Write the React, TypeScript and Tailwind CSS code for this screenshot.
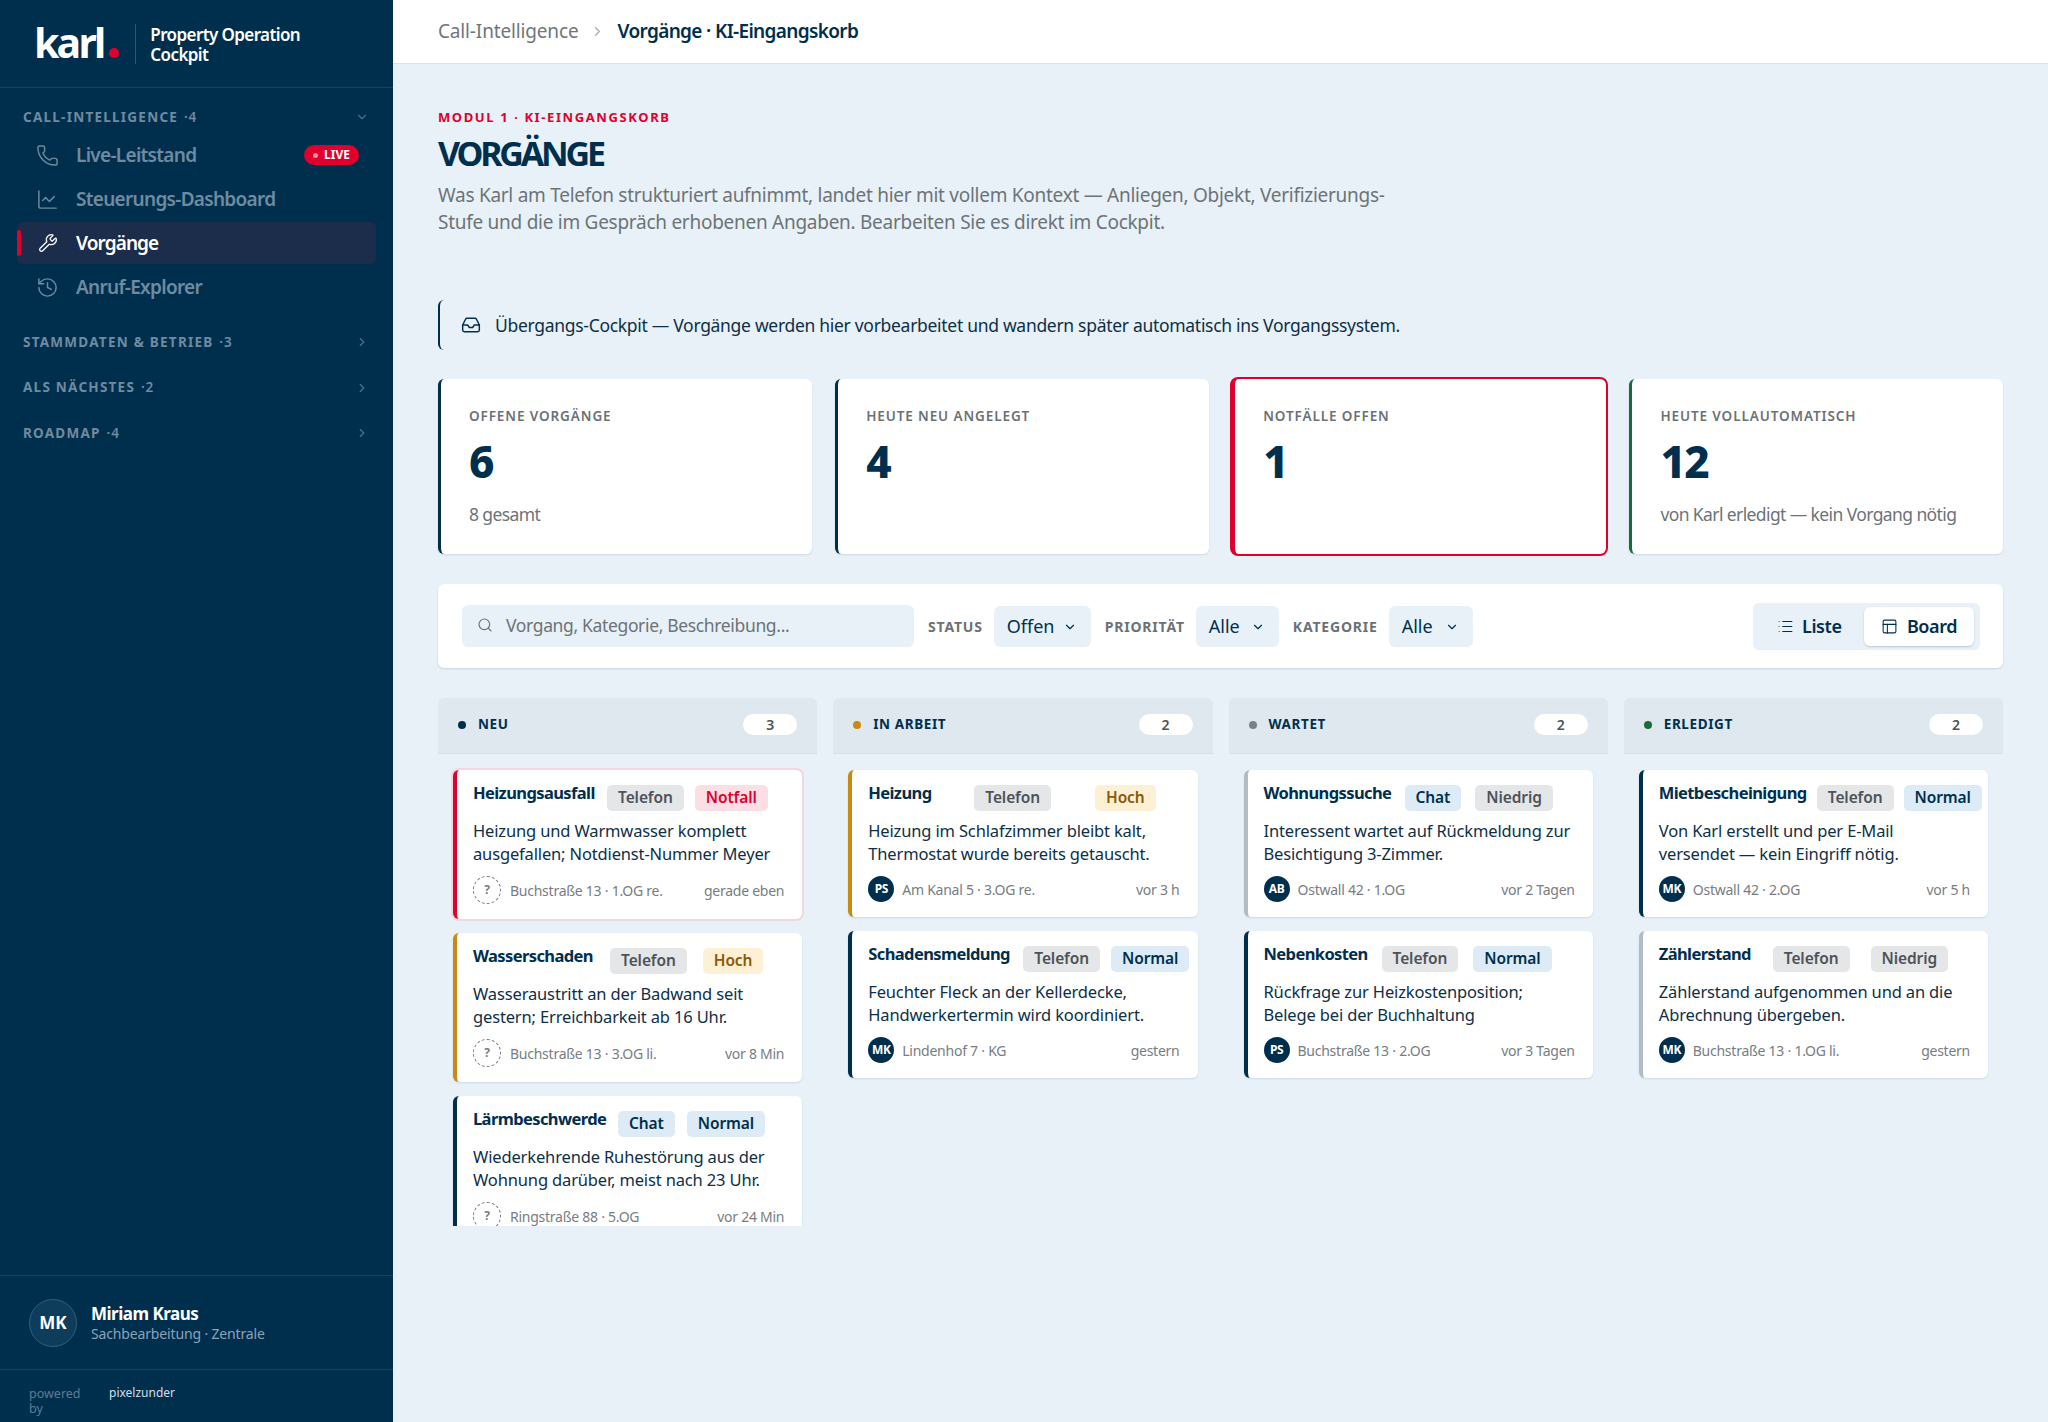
import React from 'react';
import {
  Phone,
  ChartLine,
  Wrench,
  History,
  ChevronDown,
  ChevronRight,
  Inbox,
  Search,
  List,
  PanelsTopLeft,
} from 'lucide-react';

interface Ticket {
  title: string;
  titleW: string;
  gap: string;
  chips: string[];
  lines: [string, string];
  who: string | null;
  place: string;
  time: string;
  edge: string;
  urgent?: boolean;
}

interface Column {
  name: string;
  dot: string;
  tickets: Ticket[];
}

const chipTone: Record<string, string> = {
  Telefon: 'bg-[#e4e6e8] text-[#4d5358]',
  Niedrig: 'bg-[#e4e6e8] text-[#4d5358]',
  Chat: 'bg-[#dcebf5] text-[#002f4e]',
  Normal: 'bg-[#dcebf5] text-[#002f4e]',
  Hoch: 'bg-[#fdf0d5] text-[#8a5a06]',
  Notfall: 'bg-[#fbdfe5] text-[#e0002d]',
};

const columns: Column[] = [
  {
    name: 'NEU',
    dot: 'bg-[#002f4e]',
    tickets: [
      {
        title: 'Heizungsausfall',
        titleW: 'w-[123px]',
        gap: 'gap-[11px]',
        chips: ['Telefon', 'Notfall'],
        lines: ['Heizung und Warmwasser komplett', 'ausgefallen; Notdienst-Nummer Meyer'],
        who: null,
        place: 'Buchstraße 13 · 1.OG re.',
        time: 'gerade eben',
        edge: 'border-l-[#e0002d]',
        urgent: true,
      },
      {
        title: 'Wasserschaden',
        titleW: 'w-[121px]',
        gap: 'gap-[16px]',
        chips: ['Telefon', 'Hoch'],
        lines: ['Wasseraustritt an der Badwand seit', 'gestern; Erreichbarkeit ab 16 Uhr.'],
        who: null,
        place: 'Buchstraße 13 · 3.OG li.',
        time: 'vor 8 Min',
        edge: 'border-l-[#c98a0f]',
      },
      {
        title: 'Lärmbeschwerde',
        titleW: 'w-[133px]',
        gap: 'gap-[12px]',
        chips: ['Chat', 'Normal'],
        lines: ['Wiederkehrende Ruhestörung aus der', 'Wohnung darüber, meist nach 23 Uhr.'],
        who: null,
        place: 'Ringstraße 88 · 5.OG',
        time: 'vor 24 Min',
        edge: 'border-l-[#002f4e]',
      },
    ],
  },
  {
    name: 'IN ARBEIT',
    dot: 'bg-[#c98a0f]',
    tickets: [
      {
        title: 'Heizung',
        titleW: 'w-[62px]',
        gap: 'gap-[44px]',
        chips: ['Telefon', 'Hoch'],
        lines: ['Heizung im Schlafzimmer bleibt kalt,', 'Thermostat wurde bereits getauscht.'],
        who: 'PS',
        place: 'Am Kanal 5 · 3.OG re.',
        time: 'vor 3 h',
        edge: 'border-l-[#c98a0f]',
      },
      {
        title: 'Schadensmeldung',
        titleW: 'w-[144px]',
        gap: 'gap-[11px]',
        chips: ['Telefon', 'Normal'],
        lines: ['Feuchter Fleck an der Kellerdecke,', 'Handwerkertermin wird koordiniert.'],
        who: 'MK',
        place: 'Lindenhof 7 · KG',
        time: 'gestern',
        edge: 'border-l-[#002f4e]',
      },
    ],
  },
  {
    name: 'WARTET',
    dot: 'bg-[#7b8085]',
    tickets: [
      {
        title: 'Wohnungssuche',
        titleW: 'w-[127px]',
        gap: 'gap-[14px]',
        chips: ['Chat', 'Niedrig'],
        lines: ['Interessent wartet auf Rückmeldung zur', 'Besichtigung 3-Zimmer.'],
        who: 'AB',
        place: 'Ostwall 42 · 1.OG',
        time: 'vor 2 Tagen',
        edge: 'border-l-[#b4bcc3]',
      },
      {
        title: 'Nebenkosten',
        titleW: 'w-[103px]',
        gap: 'gap-[15px]',
        chips: ['Telefon', 'Normal'],
        lines: ['Rückfrage zur Heizkostenposition;', 'Belege bei der Buchhaltung'],
        who: 'PS',
        place: 'Buchstraße 13 · 2.OG',
        time: 'vor 3 Tagen',
        edge: 'border-l-[#002f4e]',
      },
    ],
  },
  {
    name: 'ERLEDIGT',
    dot: 'bg-[#1a6b3c]',
    tickets: [
      {
        title: 'Mietbescheinigung',
        titleW: 'w-[148px]',
        gap: 'gap-[10px]',
        chips: ['Telefon', 'Normal'],
        lines: ['Von Karl erstellt und per E-Mail', 'versendet — kein Eingriff nötig.'],
        who: 'MK',
        place: 'Ostwall 42 · 2.OG',
        time: 'vor 5 h',
        edge: 'border-l-[#002f4e]',
      },
      {
        title: 'Zählerstand',
        titleW: 'w-[93px]',
        gap: 'gap-[21px]',
        chips: ['Telefon', 'Niedrig'],
        lines: ['Zählerstand aufgenommen und an die', 'Abrechnung übergeben.'],
        who: 'MK',
        place: 'Buchstraße 13 · 1.OG li.',
        time: 'gestern',
        edge: 'border-l-[#b4bcc3]',
      },
    ],
  },
];

const kpis = [
  { label: 'OFFENE VORGÄNGE', value: '6', sub: '8 gesamt', edge: 'border-l-[#002f4e]', alert: false },
  { label: 'HEUTE NEU ANGELEGT', value: '4', sub: '', edge: 'border-l-[#002f4e]', alert: false },
  { label: 'NOTFÄLLE OFFEN', value: '1', sub: '', edge: 'border-l-[#e0002d]', alert: true },
  {
    label: 'HEUTE VOLLAUTOMATISCH',
    value: '12',
    sub: 'von Karl erledigt — kein Vorgang nötig',
    edge: 'border-l-[#1a6b3c]',
    alert: false,
  },
];

const navItems = [
  { label: 'Live-Leitstand', icon: Phone, live: true, active: false },
  { label: 'Steuerungs-Dashboard', icon: ChartLine, live: false, active: false },
  { label: 'Vorgänge', icon: Wrench, live: false, active: true },
  { label: 'Anruf-Explorer', icon: History, live: false, active: false },
];

const Sidebar = () => (
  <aside className="flex w-[393px] shrink-0 flex-col bg-[#002f4e]">
    <div className="flex h-[88px] items-center border-b border-[#17435f] pl-[34px]">
      <div className="mb-[3px] flex items-end">
        <span className="text-[41px] leading-[44px] font-bold tracking-[-2.8px] text-white">karl</span>
        <span className="mb-[6px] ml-[6px] h-[10px] w-[10px] rounded-full bg-[#e0002d]" />
      </div>
      <div className="mr-[14px] ml-[16px] h-[40px] w-px bg-[#2a5470]" />
      <div className="mt-[2px] text-[17px] leading-[20px] font-semibold tracking-[-0.6px] text-white">
        Property Operation
        <br />
        Cockpit
      </div>
    </div>

    <nav className="flex-1 px-[17px] pt-[18px]">
      <div className="flex h-[22px] items-center justify-between pr-[7px] pl-[6px]">
        <span className="text-[13.5px] font-bold tracking-[1.25px] text-[#6f8ba0]">
          CALL-INTELLIGENCE <span className="ml-[1px] font-semibold tracking-[1px]">·4</span>
        </span>
        <ChevronDown size={14} className="text-[#4f7189]" />
      </div>
      <div className="mt-[5px] flex flex-col">
        {navItems.map((item) => (
          <div
            key={item.label}
            className={`relative flex items-center rounded-md pr-[17px] pl-[19px] ${
              item.active ? 'my-[1px] h-[42px] bg-[#1c2d4b]' : 'h-[44px]'
            }`}
          >
            {item.active && (
              <span className="absolute top-[8px] left-0 h-[26px] w-[4px] rounded-sm bg-[#e0002d]" />
            )}
            <item.icon
              size={item.active ? 20 : 23}
              strokeWidth={1.5}
              className={`${item.active ? 'mx-[1.5px] text-white' : 'text-[#6f8ba0]'}`}
            />
            <span
              className={`ml-[17px] text-[19px] font-semibold ${
                item.active ? 'tracking-[-0.9px] text-white' : 'tracking-[-0.7px] text-[#6f8ba0]'
              }`}
            >
              {item.label}
            </span>
            {item.live && (
              <span className="ml-auto flex h-[20px] w-[55px] items-center justify-center gap-[6px] rounded-full bg-[#e0002d] text-[12px] font-bold text-white">
                <span className="h-[5px] w-[5px] rounded-full bg-[#f58a9f]" />
                LIVE
              </span>
            )}
          </div>
        ))}
      </div>

      <div className="mt-[22px] flex flex-col gap-[23.5px]">
        {[
          ['STAMMDATEN & BETRIEB', '3'],
          ['ALS NÄCHSTES', '2'],
          ['ROADMAP', '4'],
        ].map(([name, count]) => (
          <div key={name} className="flex h-[22px] items-center justify-between pr-[7px] pl-[6px]">
            <span className="text-[13.5px] font-bold tracking-[1.25px] text-[#6f8ba0]">
              {name} <span className="ml-[1px] font-semibold tracking-[1px]">·{count}</span>
            </span>
            <ChevronRight size={14} className="text-[#4f7189]" />
          </div>
        ))}
      </div>
    </nav>

    <div className="flex h-[94px] items-center border-t border-[#17435f] pl-[29px]">
      <div className="flex h-[48px] w-[48px] items-center justify-center rounded-full border border-[#2f5f7a] bg-[#0d3d5a] text-[17px] font-bold text-white">
        MK
      </div>
      <div className="ml-[14px]">
        <div className="text-[17px] leading-[23px] font-bold tracking-[-0.5px] text-white">Miriam Kraus</div>
        <div className="text-[14px] leading-[18px] tracking-[-0.15px] text-[#8aa3b8]">Sachbearbeitung · Zentrale</div>
      </div>
    </div>

    <div className="flex h-[53px] items-start border-t border-[#17435f] pt-[16px] pl-[29px]">
      <div className="w-[80px] text-[12.5px] leading-[15px] text-[#5d7c92]">
        powered
        <br />
        by
      </div>
      <div className="text-[12px] leading-[14px] text-[#d5dfe6]">pixelzunder</div>
    </div>
  </aside>
);

const Chip = ({ text }: { text: string }) => (
  <span
    className={`flex h-[26px] shrink-0 items-center rounded-[5px] px-[11px] text-[15.5px] font-semibold tracking-[-0.1px] ${chipTone[text]}`}
  >
    {text}
  </span>
);

const TicketCard = ({ ticket }: { ticket: Ticket }) => (
  <div
    className={`w-full shrink-0 rounded-md border-l-[4px] bg-white pt-[15px] pr-[18px] pb-[15px] pl-[16px] shadow-[0_1px_2px_rgba(0,47,78,0.12)] ${ticket.edge} ${
      ticket.urgent ? 'ring-2 ring-[#f0d8df]' : ''
    }`}
  >
    <div className={`flex items-start whitespace-nowrap ${ticket.gap}`}>
      <span
        className={`shrink-0 text-[16.5px] leading-[16px] font-bold tracking-[-0.6px] text-[#002f4e] ${ticket.titleW}`}
      >
        {ticket.title}
      </span>
      {ticket.chips.map((chip) => (
        <Chip key={chip} text={chip} />
      ))}
    </div>
    <div className="mt-[8px] text-[16.5px] leading-[23px] tracking-[-0.15px] whitespace-nowrap text-[#0d2f47]">
      <div>{ticket.lines[0]}</div>
      <div>{ticket.lines[1]}</div>
    </div>
    <div className="mt-[11px] flex items-center text-[14px] tracking-[-0.25px] whitespace-nowrap text-[#777d82]">
      {ticket.who ? (
        <span className="flex h-[26px] w-[26px] shrink-0 items-center justify-center rounded-full bg-[#002f4e] text-[12px] font-bold tracking-[-0.5px] text-white">
          {ticket.who}
        </span>
      ) : (
        <span className="flex h-[28px] w-[28px] shrink-0 items-center justify-center rounded-full border border-dashed border-[#777d82] text-[12px] font-bold text-[#777d82]">
          ?
        </span>
      )}
      <span className={ticket.who ? 'ml-[8px]' : 'ml-[9px]'}>{ticket.place}</span>
      <span className="ml-auto">{ticket.time}</span>
    </div>
  </div>
);

const SelectBox = ({ value, width }: { value: string; width: string }) => (
  <div
    className={`mt-[1px] flex h-[41px] items-center justify-between rounded-md bg-[#e8f1f7] pr-[14px] pl-[13px] text-[18px] text-[#002f4e] ${width}`}
  >
    {value}
    <ChevronDown size={14} strokeWidth={2} />
  </div>
);

const FilterLabel = ({ text }: { text: string }) => (
  <span className="text-[14px] font-bold tracking-[0.8px] text-[#6b7176]">{text}</span>
);

export default function App() {
  return (
    <div className="flex min-h-screen bg-[#e8f1f7] font-['Noto_Sans',sans-serif]">
      <Sidebar />
      <main className="min-w-0 flex-1">
        <header className="flex h-[64px] items-center gap-[12px] border-b border-[#dde1e4] bg-white pl-[45px] text-[19px]">
          <span className="tracking-[-0.15px] text-[#70767b]">Call-Intelligence</span>
          <ChevronRight size={15} className="text-[#a5abb0]" />
          <span className="font-semibold tracking-[-0.65px] text-[#002f4e]">Vorgänge · KI-Eingangskorb</span>
        </header>

        <div className="pr-[45px] pl-[45px]">
          <div className="pt-[43px] text-[13px] leading-[20px] font-bold tracking-[1.6px] text-[#e0002d]">
            MODUL 1 · KI-EINGANGSKORB
          </div>
          <h1 className="mt-[4px] text-[34px] leading-[44px] font-bold tracking-[-3.2px] text-[#002f4e]">VORGÄNGE</h1>
          <p className="mt-[7px] text-[19px] leading-[27px] tracking-[-0.27px] whitespace-nowrap text-[#6d7378]">
            Was Karl am Telefon strukturiert aufnimmt, landet hier mit vollem Kontext — Anliegen, Objekt, Verifizierungs-
            <br />
            Stufe und die im Gespräch erhobenen Angaben. Bearbeiten Sie es direkt im Cockpit.
          </p>

          <div className="mt-[64px] flex h-[50px] items-center gap-[14px] rounded-md border-l-[2px] border-[#002f4e] pl-[21px] text-[17.5px] tracking-[-0.3px] text-[#0d2f47]">
            <Inbox size={20} strokeWidth={1.75} className="text-[#002f4e]" />
            Übergangs-Cockpit — Vorgänge werden hier vorbearbeitet und wandern später automatisch ins Vorgangssystem.
          </div>

          <div className="mt-[29px] grid grid-cols-4 gap-[23.5px]">
            {kpis.map((kpi) => (
              <div
                key={kpi.label}
                className={`h-[175px] rounded-md border-l-[3px] bg-white pt-[26px] pl-[28px] shadow-[0_1px_2px_rgba(0,47,78,0.12)] ${kpi.edge} ${
                  kpi.alert ? 'ring-2 ring-[#e0002d]' : ''
                }`}
              >
                <div className="text-[13.5px] leading-[22px] font-semibold tracking-[0.9px] text-[#6b7176]">
                  {kpi.label}
                </div>
                <div className="mt-[6px] text-[44px] leading-[56px] font-extrabold tracking-[-1.5px] text-[#002f4e]">
                  {kpi.value}
                </div>
                {kpi.sub && (
                  <div className="mt-[13px] text-[17.5px] leading-[24px] tracking-[-0.6px] text-[#6d7378]">
                    {kpi.sub}
                  </div>
                )}
              </div>
            ))}
          </div>

          <div className="mt-[30px] flex h-[84px] items-center rounded-md bg-white pr-[23px] pl-[24px] shadow-[0_1px_2px_rgba(0,47,78,0.15)]">
            <div className="flex h-[42px] w-[452px] items-center rounded-md bg-[#e8f1f7] pb-[2px] pl-[15px] text-[17.5px] tracking-[-0.35px] text-[#6d7378]">
              <Search size={16} strokeWidth={1.75} />
              <span className="ml-[13px]">Vorgang, Kategorie, Beschreibung...</span>
            </div>
            <div className="ml-[14px] flex items-center gap-[11px]">
              <FilterLabel text="STATUS" />
              <SelectBox value="Offen" width="w-[97px]" />
            </div>
            <div className="ml-[14px] flex items-center gap-[11px]">
              <FilterLabel text="PRIORITÄT" />
              <SelectBox value="Alle" width="w-[83px]" />
            </div>
            <div className="ml-[14px] flex items-center gap-[11px]">
              <FilterLabel text="KATEGORIE" />
              <SelectBox value="Alle" width="w-[84px]" />
            </div>
            <div className="ml-auto flex h-[47px] w-[227px] items-center justify-between rounded-md bg-[#e8f1f7] pr-[6px] pl-[24px] text-[18px] font-semibold tracking-[-0.4px] text-[#002f4e]">
              <span className="flex items-center gap-[8px]">
                <List size={17} strokeWidth={1.5} />
                Liste
              </span>
              <span className="flex h-[39px] w-[110px] items-center justify-center gap-[9px] rounded-md bg-white shadow-[0_1px_2px_rgba(0,47,78,0.2)]">
                <PanelsTopLeft size={17} strokeWidth={1.5} />
                Board
              </span>
            </div>
          </div>

          <div className="mt-[30px] grid grid-cols-4 gap-[16px]">
            {columns.map((col) => (
              <div key={col.name} className="flex h-[528px] flex-col overflow-hidden">
                <div className="flex h-[56px] shrink-0 items-center rounded-t-md border-b border-[#d6dfe6] bg-[#dfe8ef] pr-[20px] pb-[2px] pl-[20px]">
                  <span className={`h-[8px] w-[8px] rounded-full ${col.dot}`} />
                  <span className="ml-[12px] text-[13.5px] font-bold tracking-[0.6px] text-[#002f4e]">{col.name}</span>
                  <span className="ml-auto flex h-[21px] w-[54px] items-center justify-center rounded-full bg-white text-[14px] font-semibold text-[#4d5358]">
                    {col.tickets.length}
                  </span>
                </div>
                <div className="flex flex-col gap-[14px] pt-[16px] pr-[15px] pl-[15px]">
                  {col.tickets.map((ticket) => (
                    <TicketCard key={ticket.title} ticket={ticket} />
                  ))}
                </div>
              </div>
            ))}
          </div>
        </div>
      </main>
    </div>
  );
}
